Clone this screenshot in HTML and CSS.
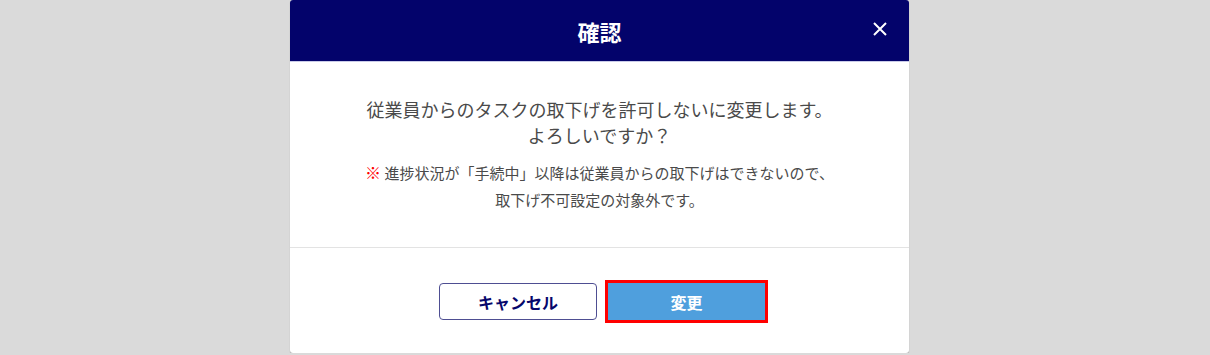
FILE: index.html
```html
<!DOCTYPE html>
<html lang="ja">
<head>
<meta charset="utf-8">
<title>確認</title>
<link rel="stylesheet" href="styles.css">
</head>
<body>
<div class="modal">
  <div class="modal-header">
    <h1 class="modal-title">確認</h1>
    <button class="close-btn" aria-label="閉じる">
      <svg width="14" height="14" viewBox="0 0 14 14"><path d="M1 1 L13 13 M13 1 L1 13" stroke="#fff" stroke-width="2" fill="none"/></svg>
    </button>
  </div>
  <div class="modal-body">
    <p class="message">従業員からのタスクの取下げを許可しないに変更します。<br>よろしいですか？</p>
    <p class="note"><span class="mark">※</span> 進捗状況が「手続中」以降は従業員からの取下げはできないので、<br>取下げ不可設定の対象外です。</p>
  </div>
  <div class="modal-footer">
    <button class="btn btn-cancel">キャンセル</button>
    <div class="highlight"><button class="btn btn-primary">変更</button></div>
  </div>
</div>
</body>
</html>
```
FILE: styles.css
```css
html, body {
  margin: 0;
  padding: 0;
  background: #dadada;
  font-family: "Noto Sans CJK JP", "Noto Sans", sans-serif;
}
.modal {
  width: 619px;
  margin-left: 290px;
  height: 353px;
  background: #fff;
  border-radius: 3px;
  overflow: hidden;
  box-shadow: 0 1px 1px rgba(0,0,0,0.25);
  display: flex;
  flex-direction: column;
}
.modal-header {
  height: 61px;
  background: #03036b;
  border-bottom: 1px solid #c9cbe8;
  display: flex;
  align-items: center;
  justify-content: center;
  position: relative;
  flex-shrink: 0;
}
.modal-title {
  margin: 0;
  color: #fff;
  font-size: 22px;
  font-weight: 700;
  line-height: 1;
  padding-top: 1px;
}
.close-btn {
  position: absolute;
  right: 21px;
  top: 21px;
  width: 16px;
  height: 16px;
  padding: 0;
  border: 0;
  background: transparent;
  display: flex;
  align-items: center;
  justify-content: center;
}
.modal-body {
  height: 186px;
  box-sizing: border-box;
  padding-top: 34px;
  border-bottom: 1px solid #e3e3e3;
  text-align: center;
  color: #4a4a4a;
  flex-shrink: 0;
}
.message {
  margin: 0;
  font-size: 18px;
  line-height: 26px;
}
.note {
  margin: 11px 0 0;
  font-size: 15px;
  line-height: 27px;
}
.mark {
  color: #ff0000;
  font-weight: 700;
  font-size: 16px;
}
.modal-footer {
  flex: 1;
  display: flex;
  justify-content: center;
  align-items: flex-start;
  padding-top: 32px;
  padding-left: 8px;
  gap: 8px;
}
.btn {
  width: 158px;
  height: 37px;
  box-sizing: border-box;
  font-family: inherit;
  font-size: 16px;
  font-weight: 700;
  border-radius: 4px;
  padding: 0;
  cursor: pointer;
}
.btn-cancel {
  margin-top: 3px;
  background: #fff;
  border: 1px solid #4e4e92;
  color: #06066b;
}
.highlight {
  border: 3px solid #ff0000;
  padding: 0;
  line-height: 0;
}
.btn-primary {
  width: 157px;
  background: #4f9fdd;
  border: 1px solid #4f9fdd;
  border-radius: 0;
  color: #fff;
}
```
